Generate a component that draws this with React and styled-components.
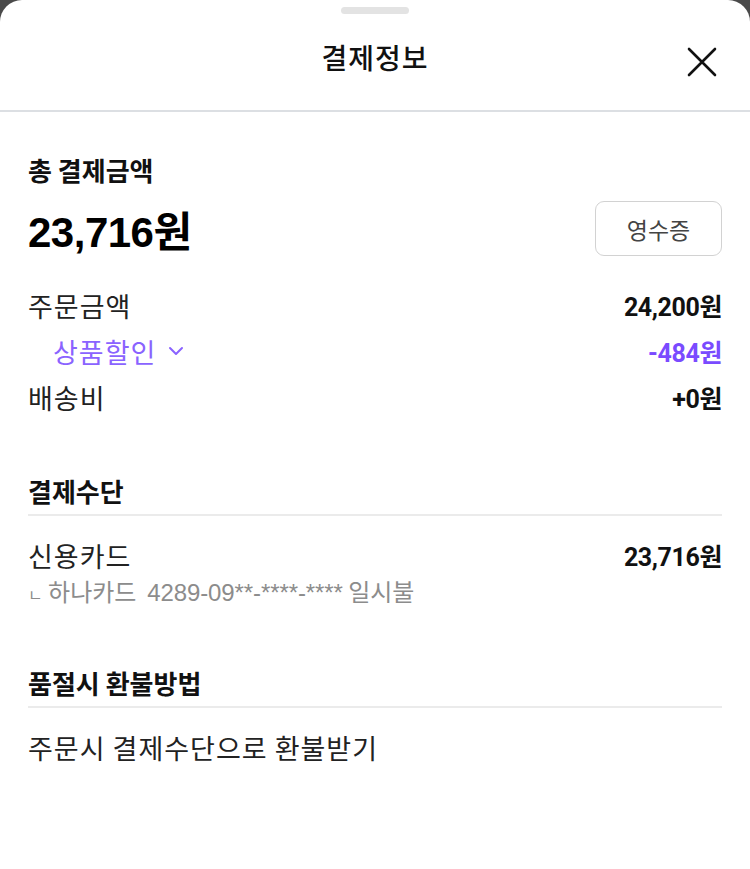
import React from 'react';
import styled, { createGlobalStyle } from 'styled-components';

const GlobalStyle = createGlobalStyle`
  html, body {
    margin: 0;
    padding: 0;
    background: #4a4a4a;
  }
  body {
    font-family: 'Noto Sans CJK KR', 'Noto Sans', sans-serif;
    color: #222;
  }
`;

const Sheet = styled.div`
  width: 750px;
  min-height: 869px;
  background: #fff;
  border-radius: 22px 22px 0 0;
  display: flex;
  flex-direction: column;
`;
const Handle = styled.div`
  width: 68px;
  height: 7px;
  margin: 7px auto 0;
  border-radius: 4px;
  background: #e3e3e3;
`;
const Header = styled.div`
  height: 96px;
  display: grid;
  grid-template-columns: 1fr auto 1fr;
  align-items: center;
  border-bottom: 2px solid #dcdfe3;
  padding: 0 28px;
`;
const Title = styled.h1`
  grid-column: 2;
  margin: 0 0 10px;
  font-size: 28px;
  font-weight: 500;
  letter-spacing: 1px;
  color: #111;
  line-height: 34px;
`;
const CloseButton = styled.button`
  justify-self: end;
  width: 40px;
  height: 40px;
  border: none;
  background: none;
  padding: 0;
  display: flex;
  align-items: center;
  justify-content: center;
  cursor: pointer;
`;
const Body = styled.div`
  padding: 0 28px;
`;
const Section = styled.section`
  padding-top: ${(p) => p.top}px;
`;
const Heading = styled.h2`
  margin: 0;
  font-size: 26px;
  font-weight: 700;
  color: #111;
  line-height: 32px;
  padding-bottom: ${(p) => (p.divided ? '7px' : '0')};
  border-bottom: ${(p) => (p.divided ? '2px solid #ebebeb' : 'none')};
`;
const TotalRow = styled.div`
  display: flex;
  align-items: center;
  justify-content: space-between;
  margin-top: 12px;
  margin-bottom: 30px;
`;
const Total = styled.div`
  font-family: 'Liberation Sans', 'Noto Sans CJK KR', sans-serif;
  font-size: 42px;
  font-weight: 700;
  color: #000;
  letter-spacing: -0.5px;
`;
const ReceiptButton = styled.button`
  width: 127px;
  height: 55px;
  border: 1.5px solid #d2d2d2;
  border-radius: 9px;
  background: #fff;
  font-family: 'Noto Sans CJK KR', sans-serif;
  font-size: 23px;
  color: #444;
  cursor: pointer;
`;
const Rows = styled.div`
  display: flex;
  flex-direction: column;
  gap: ${(p) => p.gap || 14}px;
  margin-top: ${(p) => p.mt || 0}px;
`;
const Row = styled.div`
  display: flex;
  justify-content: space-between;
  align-items: center;
  height: 32px;
`;
const Label = styled.span`
  display: flex;
  align-items: center;
  gap: 12px;
  font-size: 27px;
  letter-spacing: 1px;
  color: ${(p) => (p.accent ? '#8a63ff' : '#222')};
  padding-left: ${(p) => (p.indent ? '25px' : '0')};
`;
const Amount = styled.span`
  font-family: Roboto, 'Noto Sans CJK KR', sans-serif;
  font-size: 25px;
  font-weight: 700;
  letter-spacing: -0.4px;
  color: ${(p) => (p.accent ? '#7a4bff' : '#111')};
`;
const CardDetail = styled.div`
  font-size: 24px;
  color: #8c8c8c;
  line-height: 30px;
  margin-top: 5px;
  white-space: pre;
`;
const CardNumber = styled.span`
  font-family: 'Liberation Sans', sans-serif;
  letter-spacing: -0.1px;
`;
const Jamo = styled.span`
  font-size: 16px;
`;
const Text = styled.div`
  font-size: 27px;
  letter-spacing: 1px;
  color: #222;
  line-height: 32px;
  margin-top: 24px;
`;

function CloseIcon() {
  return (
    <svg width="30" height="30" viewBox="0 0 30 30">
      <path d="M2 2 L28 28 M28 2 L2 28" stroke="#111" strokeWidth="2.6" strokeLinecap="round" />
    </svg>
  );
}

function Chevron() {
  return (
    <svg width="16" height="10" viewBox="0 0 16 10">
      <path d="M2 2 L8 8 L14 2" stroke="#8a63ff" strokeWidth="2" fill="none" strokeLinecap="round" strokeLinejoin="round" />
    </svg>
  );
}

export default function App() {
  return (
    <>
      <GlobalStyle />
      <Sheet>
        <Handle />
        <Header>
          <Title>결제정보</Title>
          <CloseButton aria-label="닫기">
            <CloseIcon />
          </CloseButton>
        </Header>
        <Body>
          <Section top={42}>
            <Heading>총 결제금액</Heading>
            <TotalRow>
              <Total>23,716원</Total>
              <ReceiptButton>영수증</ReceiptButton>
            </TotalRow>
            <Rows>
              <Row>
                <Label>주문금액</Label>
                <Amount>24,200원</Amount>
              </Row>
              <Row>
                <Label accent indent>
                  상품할인 <Chevron />
                </Label>
                <Amount accent>-484원</Amount>
              </Row>
              <Row>
                <Label>배송비</Label>
                <Amount>+0원</Amount>
              </Row>
            </Rows>
          </Section>
          <Section top={62}>
            <Heading divided>결제수단</Heading>
            <Rows mt={23}>
              <Row>
                <Label>신용카드</Label>
                <Amount>23,716원</Amount>
              </Row>
            </Rows>
            <CardDetail>
              <Jamo>ㄴ</Jamo> 하나카드  <CardNumber>4289-09**-****-****</CardNumber> 일시불
            </CardDetail>
          </Section>
          <Section top={58}>
            <Heading divided>품절시 환불방법</Heading>
            <Text>주문시 결제수단으로 환불받기</Text>
          </Section>
        </Body>
      </Sheet>
    </>
  );
}
